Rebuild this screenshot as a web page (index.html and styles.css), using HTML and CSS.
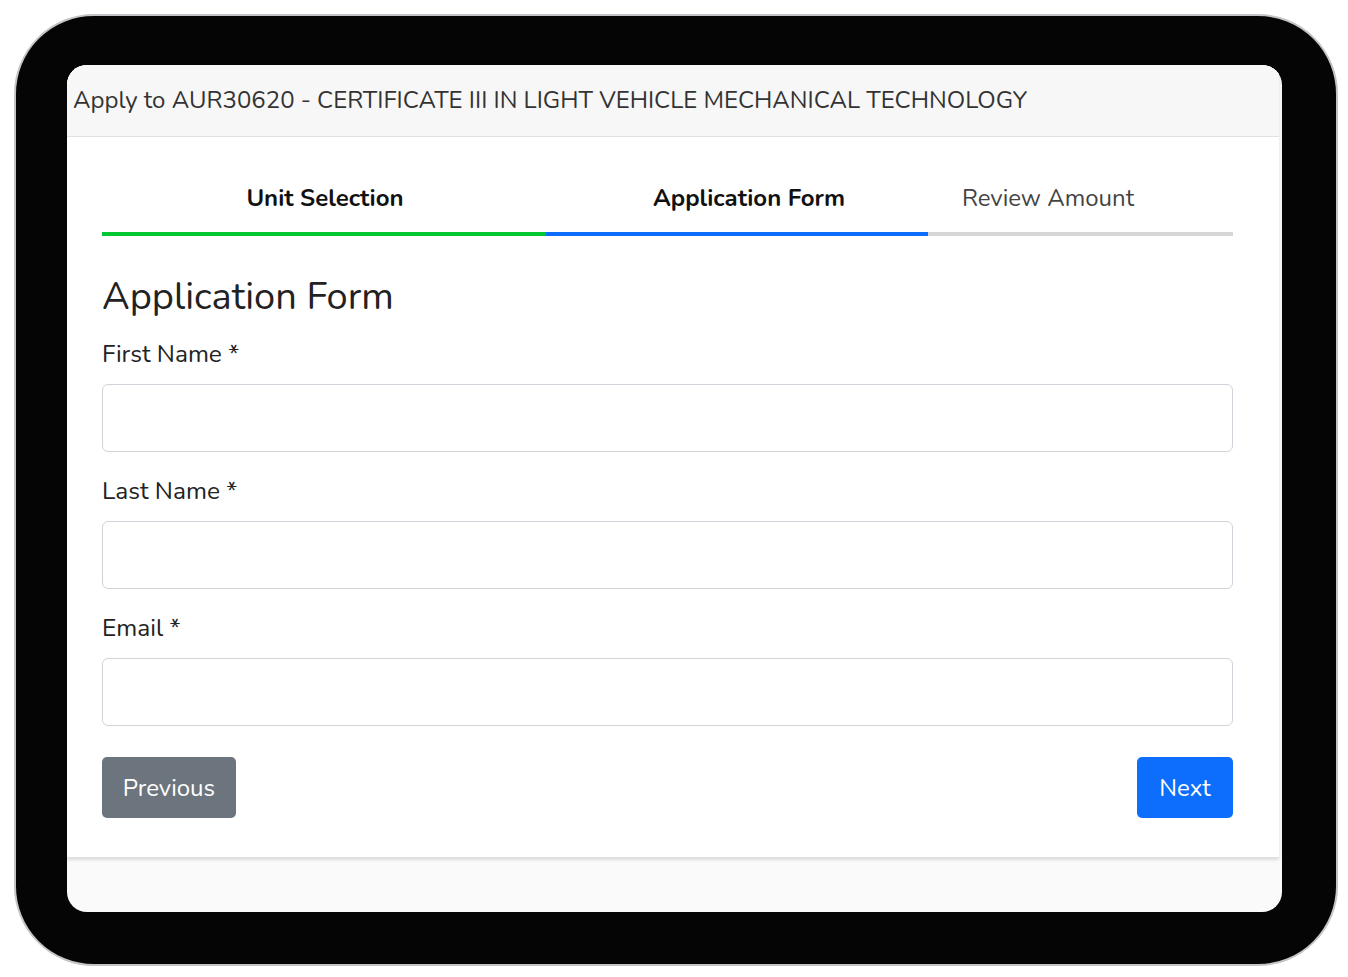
FILE: index.html
```html
<!doctype html>
<html lang="en">
<head>
    <meta charset="utf-8">
    <meta name="viewport" content="width=device-width, initial-scale=1">
    <title>Apply to AUR30620</title>
    <link rel="stylesheet" href="styles.css">
</head>
<body>

<div class="device">
    <div class="screen">
        <div class="card">
            <div class="card-header">
                Apply to AUR30620 - CERTIFICATE III IN LIGHT VEHICLE MECHANICAL TECHNOLOGY
            </div>

            <div class="card-body">
                <div class="steps">
                    <div class="step done">Unit Selection</div>
                    <div class="step active">Application Form</div>
                    <div class="step">Review Amount</div>
                </div>
                <div class="progress">
                    <div class="bar bar-done"></div>
                    <div class="bar bar-active"></div>
                    <div class="bar bar-rest"></div>
                </div>

                <h2>Application Form</h2>

                <form>
                    <div class="field">
                        <label for="first_name">First Name *</label>
                        <input type="text" id="first_name" name="first_name">
                    </div>
                    <div class="field">
                        <label for="last_name">Last Name *</label>
                        <input type="text" id="last_name" name="last_name">
                    </div>
                    <div class="field">
                        <label for="email">Email *</label>
                        <input type="email" id="email" name="email">
                    </div>

                    <div class="actions">
                        <button type="button" class="btn btn-secondary">Previous</button>
                        <button type="button" class="btn btn-primary">Next</button>
                    </div>
                </form>
            </div>
        </div>
    </div>
</div>

</body>
</html>
```

FILE: styles.css
```css
body {
    margin: 0;
    background-color: #ffffff;
    font-family: 'Nunito', 'Lato', sans-serif;
    color: #212529;
}

.device {
    box-sizing: border-box;
    width: 1324px;
    height: 952px;
    margin: 14px 0 0 14px;
    padding: 49px 54px 52px 51px;
    border: 2px solid #c4c4c8;
    border-radius: 80px;
    background-color: #050506;
}

.screen {
    display: flex;
    flex-direction: column;
    height: 100%;
    border-radius: 20px;
    overflow: hidden;
    background-color: #fbfafb;
}

.card {
    margin-right: 3px;
    background-color: #ffffff;
    box-shadow: 0 2px 3px rgba(0, 0, 0, 0.12);
    border-bottom: 1px solid #dde1e4;
}

.card-header {
    height: 72px;
    box-sizing: border-box;
    padding: 17px 6px 0;
    background-color: #f7f7f7;
    border-bottom: 1px solid #dfe1e3;
    font-size: 24px;
    line-height: 36px;
    color: #333;
    white-space: nowrap;
}

.card-body {
    padding: 43px 46px 39px 35px;
}

.steps {
    display: grid;
    grid-template-columns: 446px 402px 196px 1fr;
    font-size: 24px;
    line-height: 36px;
}

.step {
    text-align: center;
    color: #444;
}

.step.done,
.step.active {
    font-weight: bold;
    color: #111;
}

.progress {
    display: flex;
    height: 4px;
    margin-top: 16px;
}

.bar-done {
    width: 444px;
    background-color: #00c832;
}

.bar-active {
    width: 382px;
    background-color: #0d6efd;
}

.bar-rest {
    flex: 1;
    background-color: #d6d6d6;
}

h2 {
    margin: 37px 0 15px;
    font-size: 38px;
    font-weight: normal;
    line-height: 48px;
    color: #222;
}

.field {
    display: flex;
    flex-direction: column;
    margin-bottom: 21px;
}

label {
    font-size: 24.5px;
    line-height: 36px;
    margin-bottom: 12px;
    color: #222;
}

input {
    box-sizing: border-box;
    height: 68px;
    padding: 0 18px;
    border: 1px solid #ced4da;
    border-radius: 6px;
    font-family: inherit;
    font-size: 24px;
}

.actions {
    display: flex;
    justify-content: space-between;
    margin-top: 31px;
}

.btn {
    height: 61px;
    padding: 0 18px;
    border: none;
    border-radius: 5px;
    font-family: inherit;
    font-size: 24px;
    color: #fff;
}

.btn-secondary {
    width: 134px;
    background-color: #6c757d;
}

.btn-primary {
    width: 96px;
    background-color: #0d6efd;
}
```
